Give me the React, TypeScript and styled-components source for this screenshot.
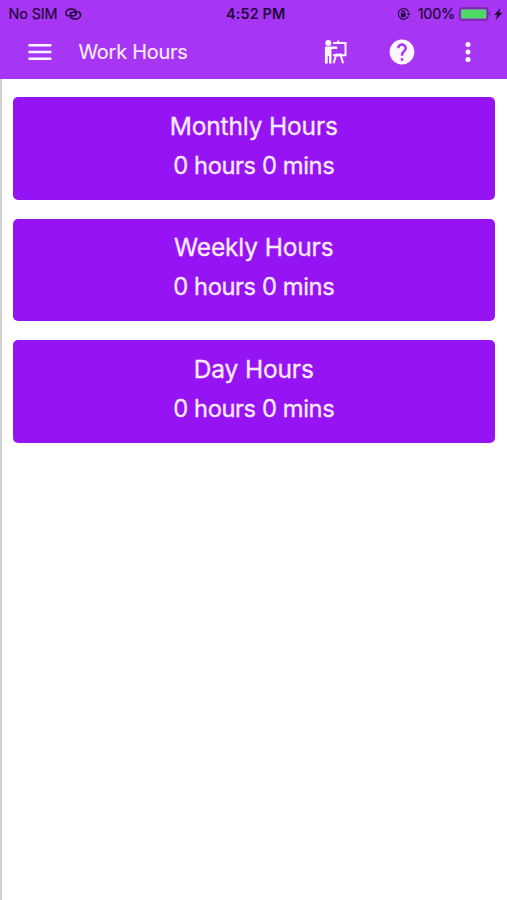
import React from "react";
import styled, { createGlobalStyle } from "styled-components";

const GlobalStyle = createGlobalStyle`
  * { box-sizing: border-box; }
  body { margin: 0; background: #fff; font-family: Inter, "Liberation Sans", sans-serif; }
`;

const Screen = styled.div`
  height: 900px;
  width: 507px;
  display: flex;
  flex-direction: column;
  overflow: hidden;
`;

const Header = styled.header`
  height: 79.3px;
  flex: none;
  background: #a636f3;
`;

const StatusBar = styled.div`
  height: 27px;
  display: grid;
  grid-template-columns: 1fr auto 1fr;
  align-items: center;
  padding: 0 5px 0 8.5px;
  color: #220738;
  font-size: 14.4px;
  line-height: 27px;
  white-space: nowrap;
`;

const StatusGroup = styled.div<{ $end?: boolean }>`
  display: flex;
  align-items: center;
  justify-content: ${(p) => (p.$end ? "flex-end" : "flex-start")};
  gap: 7.5px;
`;

const Carrier = styled.span`
  letter-spacing: -0.1px;
  -webkit-text-stroke: 0.2px currentColor;
`;

const Clock = styled.span`
  padding-left: 1px;
  font-size: 14.4px;
  font-weight: 600;
  letter-spacing: 0.15px;
`;

const Charge = styled.span`
  letter-spacing: -0.2px;
  -webkit-text-stroke: 0.2px currentColor;
`;

const BatteryGroup = styled.div`
  display: flex;
  align-items: center;
  gap: 3px;
  margin-left: -4px;
`;

const Toolbar = styled.div`
  height: 50px;
  display: flex;
  align-items: center;
  padding: 0 26.5px 0 27px;
  color: #fff;
`;

const IconButton = styled.button`
  display: flex;
  align-items: center;
  justify-content: center;
  width: 26px;
  height: 30px;
  padding: 0;
  border: 0;
  background: none;
  color: #fff6ff;
`;

const PageTitle = styled.h1`
  flex: 1;
  margin: 0 0 0 25.5px;
  font-size: 19.9px;
  font-weight: 400;
  line-height: 31px;
  padding-top: 1px;
  letter-spacing: -0.22px;
  color: #fceaff;
  -webkit-text-stroke: 0.15px currentColor;
`;

const Actions = styled.div`
  display: flex;
  gap: 40px;
`;

const Content = styled.main`
  flex: 1;
  display: flex;
  flex-direction: column;
  gap: 19px;
  padding: 18.2px 12.5px 0 11px;
  border-left: 2px solid #d0d0d0;
`;

const Card = styled.section`
  height: 102.5px;
  padding-top: 8.5px;
  border-radius: 5px;
  background: #9614f3;
  color: #fceaff;
  text-align: center;
  -webkit-text-stroke: 0.3px currentColor;
`;

const CardTitle = styled.h2`
  margin: 0;
  font-size: 24.5px;
  font-weight: 400;
  line-height: 40px;
  letter-spacing: -0.15px;
`;

const CardValue = styled.p`
  margin: 0;
  font-size: 23.7px;
  font-weight: 400;
  line-height: 40px;
  letter-spacing: -0.38px;
`;

const LinkIcon = () => (
  <svg width="17" height="12" viewBox="0 0 17 12" fill="none" stroke="currentColor" strokeWidth="1.5">
    <path d="M4 8.2C1.8 8 .9 6.7.9 5.1.9 2.7 3.4 1 6.2 1c2.9 0 5.1 1.5 5.1 3.7 0 2-1.7 3.3-3.9 3.3-1.2 0-2-.5-2.3-1.2" />
    <path d="M12.5 3.8c2.2.2 3.1 1.5 3.1 3.1 0 2.4-2.5 4.1-5.3 4.1-2.9 0-5.1-1.5-5.1-3.7 0-2 1.7-3.3 3.9-3.3 1.2 0 2 .5 2.3 1.2" />
  </svg>
);

const RotationLockIcon = () => (
  <svg width="13.5" height="14" viewBox="0 0 14 14" fill="none" stroke="currentColor">
    <path d="M11.8 9.3A5.5 5.5 0 1 1 12.1 5" strokeWidth="1.2" />
    <path d="M10.2 6h3.7L12 8.8z" fill="currentColor" stroke="none" />
    <rect x="4" y="6.1" width="5" height="4" rx=".5" fill="currentColor" stroke="none" />
    <path d="M5 6.4V5a1.5 1.5 0 0 1 3 0v1.4" strokeWidth="1.1" />
  </svg>
);

const BatteryIcon = () => (
  <svg width="32" height="14" viewBox="0 0 32 14">
    <rect x=".7" y="1" width="28" height="12" rx="2.2" fill="none" stroke="#6d2d9b" strokeWidth="1.3" />
    <rect x="2.2" y="2.5" width="25" height="9" rx=".8" fill="#4dd964" />
    <path d="M30 5v4q1.3-.5 1.3-2T30 5z" fill="#6d2d9b" />
  </svg>
);

const BoltIcon = () => (
  <svg width="8.5" height="12" viewBox="0 0 8 12" preserveAspectRatio="none" fill="currentColor">
    <path d="M5.9.3.2 6.9h2.7L1.6 11.8 7.9 4.8H4.9z" />
  </svg>
);

const MenuIcon = () => (
  <svg width="24" height="18" viewBox="0 0 24 18" fill="currentColor">
    <path d="M.4.9h23v2.5H.4zM.4 7.7h23v2.5H.4zM.4 14.5h23v2.5H.4z" />
  </svg>
);

const PresenterIcon = () => (
  <svg width="24" height="26" viewBox="0 0 24 26" fill="none" stroke="currentColor">
    <circle cx="4.3" cy="3.9" r="3" fill="currentColor" stroke="none" />
    <path d="M.9 8.3q0-.8.8-.8h11.6v2.5H7.5v14.5H5V17H3.7v7.5H.9z" fill="currentColor" stroke="none" />
    <path d="M9 4.1h12.5v12.1H9M14.3 4V1.5M12 16.2 9.6 24.3M16.7 16.2l2.4 8.1" strokeWidth="2" />
    <path d="M11.3 15.9h6.4" strokeWidth="2.6" />
  </svg>
);

const HelpIcon = () => (
  <svg width="26" height="26" viewBox="1.5 1.5 21 21" fill="currentColor">
    <path d="M12 2C6.48 2 2 6.48 2 12s4.48 10 10 10 10-4.48 10-10S17.52 2 12 2zm1 17h-2v-2h2v2zm2.07-7.75-.9.92C13.45 12.9 13 13.5 13 15h-2v-.5c0-1.1.45-2.1 1.17-2.83l1.24-1.26c.37-.36.59-.86.59-1.41 0-1.1-.9-2-2-2s-2 .9-2 2H8c0-2.21 1.79-4 4-4s4 1.79 4 4c0 .88-.36 1.68-.93 2.25z" />
  </svg>
);

const MoreIcon = () => (
  <svg width="6" height="22" viewBox="0 0 6 22" fill="currentColor">
    <circle cx="3" cy="3.6" r="2.5" />
    <circle cx="3" cy="11" r="2.5" />
    <circle cx="3" cy="18.4" r="2.5" />
  </svg>
);

const periods = ["Monthly Hours", "Weekly Hours", "Day Hours"];

export default function App() {
  return (
    <Screen>
      <GlobalStyle />
      <Header>
        <StatusBar>
          <StatusGroup>
            <Carrier>No SIM</Carrier>
            <LinkIcon />
          </StatusGroup>
          <Clock>4:52 PM</Clock>
          <StatusGroup $end>
            <RotationLockIcon />
            <Charge>100%</Charge>
            <BatteryGroup>
              <BatteryIcon />
              <BoltIcon />
            </BatteryGroup>
          </StatusGroup>
        </StatusBar>
        <Toolbar>
          <IconButton aria-label="Menu"><MenuIcon /></IconButton>
          <PageTitle>Work Hours</PageTitle>
          <Actions>
            <IconButton aria-label="Tutorial"><PresenterIcon /></IconButton>
            <IconButton aria-label="Help"><HelpIcon /></IconButton>
            <IconButton aria-label="More"><MoreIcon /></IconButton>
          </Actions>
        </Toolbar>
      </Header>
      <Content>
        {periods.map((name) => (
          <Card key={name}>
            <CardTitle>{name}</CardTitle>
            <CardValue>0 hours 0 mins</CardValue>
          </Card>
        ))}
      </Content>
    </Screen>
  );
}
